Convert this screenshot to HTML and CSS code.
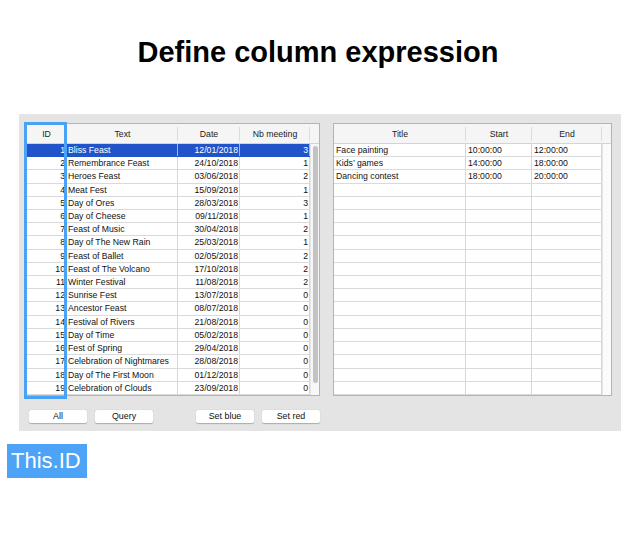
FILE: index.html
```html
<!DOCTYPE html>
<html>
<head>
<meta charset="utf-8">
<link rel="stylesheet" href="styles.css">
</head>
<body>
<h1 class="title">Define column expression</h1>
<div class="panel">
  <div class="col-left">
    <div class="table t-left">
      <div class="head">
        <div class="hc">ID</div><div class="hc">Text</div><div class="hc">Date</div><div class="hc">Nb meeting</div><div class="hc spacer"></div>
      </div>
      <div class="body">
        <div class="rows">
          <div class="row sel"><div class="c r">1</div><div class="c">Bliss Feast</div><div class="c r">12/01/2018</div><div class="c r">3</div></div>
          <div class="row"><div class="c r">2</div><div class="c">Remembrance Feast</div><div class="c r">24/10/2018</div><div class="c r">1</div></div>
          <div class="row"><div class="c r">3</div><div class="c">Heroes Feast</div><div class="c r">03/06/2018</div><div class="c r">2</div></div>
          <div class="row"><div class="c r">4</div><div class="c">Meat Fest</div><div class="c r">15/09/2018</div><div class="c r">1</div></div>
          <div class="row"><div class="c r">5</div><div class="c">Day of Ores</div><div class="c r">28/03/2018</div><div class="c r">3</div></div>
          <div class="row"><div class="c r">6</div><div class="c">Day of Cheese</div><div class="c r">09/11/2018</div><div class="c r">1</div></div>
          <div class="row"><div class="c r">7</div><div class="c">Feast of Music</div><div class="c r">30/04/2018</div><div class="c r">2</div></div>
          <div class="row"><div class="c r">8</div><div class="c">Day of The New Rain</div><div class="c r">25/03/2018</div><div class="c r">1</div></div>
          <div class="row"><div class="c r">9</div><div class="c">Feast of Ballet</div><div class="c r">02/05/2018</div><div class="c r">2</div></div>
          <div class="row"><div class="c r">10</div><div class="c">Feast of The Volcano</div><div class="c r">17/10/2018</div><div class="c r">2</div></div>
          <div class="row"><div class="c r">11</div><div class="c">Winter Festival</div><div class="c r">11/08/2018</div><div class="c r">2</div></div>
          <div class="row"><div class="c r">12</div><div class="c">Sunrise Fest</div><div class="c r">13/07/2018</div><div class="c r">0</div></div>
          <div class="row"><div class="c r">13</div><div class="c">Ancestor Feast</div><div class="c r">08/07/2018</div><div class="c r">0</div></div>
          <div class="row"><div class="c r">14</div><div class="c">Festival of Rivers</div><div class="c r">21/08/2018</div><div class="c r">0</div></div>
          <div class="row"><div class="c r">15</div><div class="c">Day of Time</div><div class="c r">05/02/2018</div><div class="c r">0</div></div>
          <div class="row"><div class="c r">16</div><div class="c">Fest of Spring</div><div class="c r">29/04/2018</div><div class="c r">0</div></div>
          <div class="row"><div class="c r">17</div><div class="c">Celebration of Nightmares</div><div class="c r">28/08/2018</div><div class="c r">0</div></div>
          <div class="row"><div class="c r">18</div><div class="c">Day of The First Moon</div><div class="c r">01/12/2018</div><div class="c r">0</div></div>
          <div class="row"><div class="c r">19</div><div class="c">Celebration of Clouds</div><div class="c r">23/09/2018</div><div class="c r">0</div></div>
        </div>
        <div class="track"><div class="thumb"></div></div>
      </div>
    </div>
    <div class="buttons">
      <div class="grp"><button class="btn">All</button><button class="btn">Query</button></div>
      <div class="grp"><button class="btn">Set blue</button><button class="btn">Set red</button></div>
    </div>
  </div>
  <div class="table t-right">
    <div class="head">
      <div class="hc">Title</div><div class="hc">Start</div><div class="hc">End</div><div class="hc spacer"></div>
    </div>
    <div class="body">
      <div class="rows">
        <div class="row"><div class="c">Face painting</div><div class="c">10:00:00</div><div class="c">12:00:00</div></div>
        <div class="row"><div class="c">Kids’ games</div><div class="c">14:00:00</div><div class="c">18:00:00</div></div>
        <div class="row"><div class="c">Dancing contest</div><div class="c">18:00:00</div><div class="c">20:00:00</div></div>
        <div class="row"><div class="c"></div><div class="c"></div><div class="c"></div></div>
        <div class="row"><div class="c"></div><div class="c"></div><div class="c"></div></div>
        <div class="row"><div class="c"></div><div class="c"></div><div class="c"></div></div>
        <div class="row"><div class="c"></div><div class="c"></div><div class="c"></div></div>
        <div class="row"><div class="c"></div><div class="c"></div><div class="c"></div></div>
        <div class="row"><div class="c"></div><div class="c"></div><div class="c"></div></div>
        <div class="row"><div class="c"></div><div class="c"></div><div class="c"></div></div>
        <div class="row"><div class="c"></div><div class="c"></div><div class="c"></div></div>
        <div class="row"><div class="c"></div><div class="c"></div><div class="c"></div></div>
        <div class="row"><div class="c"></div><div class="c"></div><div class="c"></div></div>
        <div class="row"><div class="c"></div><div class="c"></div><div class="c"></div></div>
        <div class="row"><div class="c"></div><div class="c"></div><div class="c"></div></div>
        <div class="row"><div class="c"></div><div class="c"></div><div class="c"></div></div>
        <div class="row"><div class="c"></div><div class="c"></div><div class="c"></div></div>
        <div class="row"><div class="c"></div><div class="c"></div><div class="c"></div></div>
        <div class="row"><div class="c"></div><div class="c"></div><div class="c"></div></div>
      </div>
      <div class="track plain"></div>
    </div>
  </div>
  <div class="hilite"></div>
</div>
<div class="tag">This.ID</div>
</body>
</html>
```

FILE: styles.css
```css
* { box-sizing: border-box; }
html, body { margin: 0; padding: 0; background: #ffffff; }
body {
  width: 640px;
  height: 560px;
  font-family: "Liberation Sans", Arial, sans-serif;
  color: #111;
  overflow: hidden;
}
.title {
  margin: 0;
  padding-top: 35px;
  height: 69px;
  line-height: 34px;
  font-size: 29px;
  font-weight: bold;
  text-align: center;
  color: #000;
  padding-right: 4px;
}
.panel {
  position: relative;
  margin: 45px 0 0 19px;
  width: 602px;
  height: 317px;
  background: #e4e4e4;
  padding: 9px 0 0 6px;
  display: flex;
  align-items: flex-start;
}
.col-left {
  display: flex;
  flex-direction: column;
}
.table {
  height: 273px;
  border: 1px solid #b4b4b4;
  background: #ffffff;
  display: flex;
  flex-direction: column;
  font-size: 8.7px;
}
.t-left { width: 295px; }
.t-right { width: 279px; margin-left: 13px; }

.head {
  display: grid;
  height: 20px;
  background: #f5f5f5;
  border-bottom: 1px solid #d4d4d4;
  padding-top: 1px;
}
.t-left .head { grid-template-columns: 41px 111px 62px 70px 9px; }
.t-right .head { grid-template-columns: 132px 66px 70px 9px; }
.hc {
  position: relative;
  display: flex;
  align-items: center;
  justify-content: center;
  color: #222;
}
.hc::after {
  content: "";
  position: absolute;
  right: 0;
  top: 2px;
  bottom: 2px;
  width: 1px;
  background: #dcdcdc;
}
.hc.spacer::after { display: none; }

.body {
  flex: 1;
  display: flex;
}
.rows { display: flex; flex-direction: column; }
.t-left .rows { width: 284px; }
.t-right .rows { width: 268px; }
.row {
  display: grid;
  height: 13.22px;
  border-bottom: 1px solid #dadada;
}
.t-left .row { grid-template-columns: 41px 111px 62px 70px; }
.t-right .row { grid-template-columns: 132px 66px 70px; }
.c {
  border-right: 1px solid #d6d6d6;
  line-height: 13.5px;
  padding: 0 2px;
  white-space: nowrap;
  overflow: hidden;
  color: #111;
}
.t-left .c { padding: 0 1px; }
.c.r { text-align: right; }
.row.sel { background: #2154cb; border-bottom-color: #2154cb; }
.row.sel .c { color: #fff; border-right-color: #9fb6ea; }

.track {
  flex: 1;
  background: #f7f7f7;
  border-left: 1px solid #e6e6e6;
  padding: 2px 1px 0 2px;
}
.track.plain { background: #fbfbfb; }
.thumb {
  width: 5px;
  height: 237px;
  border-radius: 3px;
  background: #c3c3c3;
}

.buttons {
  display: flex;
  justify-content: space-between;
  margin-top: 14px;
  padding-left: 4px;
}
.grp { display: flex; gap: 8px; }
.btn {
  width: 58px;
  height: 13px;
  margin: 0;
  padding: 0;
  border: none;
  border-radius: 2px;
  background: #ffffff;
  box-shadow: 0 0.5px 1px rgba(0,0,0,0.25);
  font-family: "Liberation Sans", Arial, sans-serif;
  font-size: 8.9px;
  line-height: 13px;
  color: #111;
}

.hilite {
  position: absolute;
  left: 5px;
  top: 8px;
  width: 43px;
  height: 277px;
  border: 3px solid #4aa2f5;
  pointer-events: none;
}

.tag {
  margin: 13px 0 0 7px;
  width: 80px;
  height: 34px;
  background: #4ca3f7;
  color: #ffffff;
  font-size: 22px;
  line-height: 34px;
  padding-left: 4px;
}
```
